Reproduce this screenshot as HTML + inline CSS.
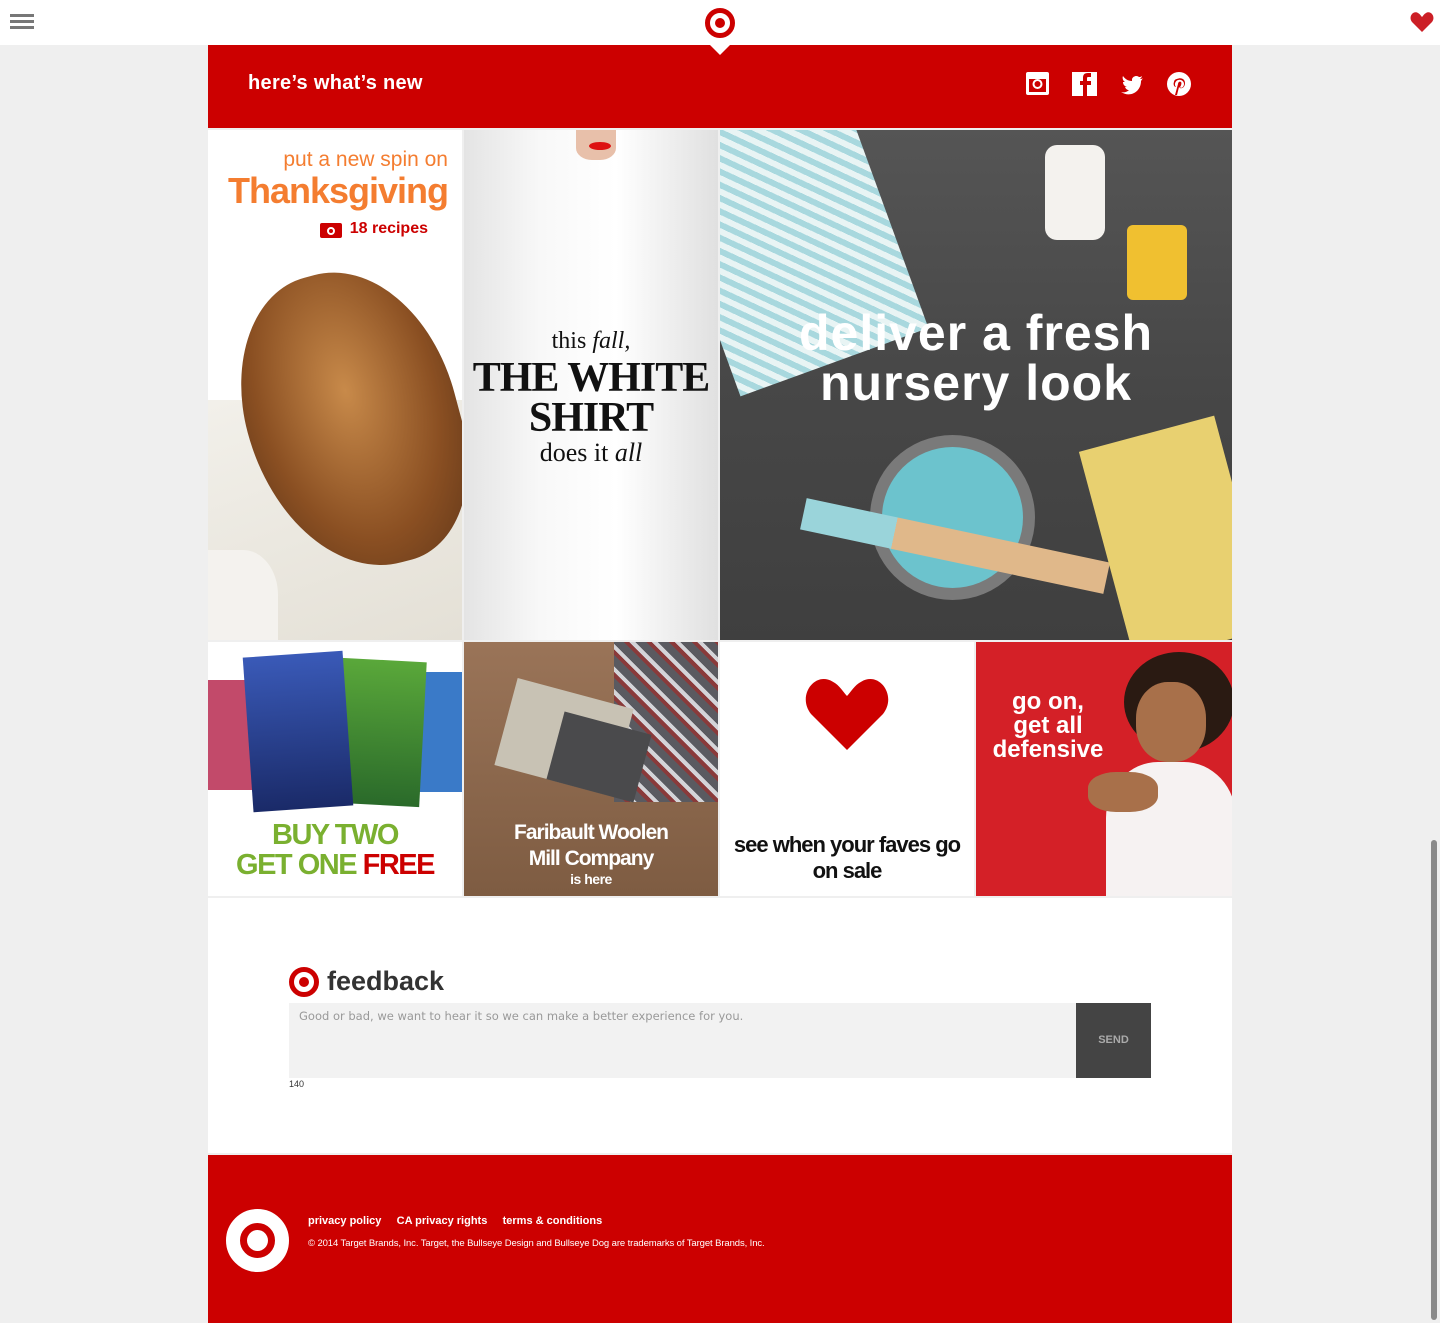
<!DOCTYPE html>
<html><head><meta charset="utf-8"><style>
*{margin:0;padding:0;box-sizing:border-box}
body{width:1440px;height:1323px;background:#efefef;font-family:"Liberation Sans",sans-serif;position:relative;overflow:hidden}
.abs{position:absolute}
</style></head><body>
<div class="abs" style="left:0;top:0;width:1440px;height:45px;background:#fff"></div>
<div class="abs" style="left:10px;top:14px;width:24px;height:3px;background:#777;box-shadow:0 6px 0 #777,0 12px 0 #777"></div>
<div class="abs" style="left:705px;top:8px;width:30px;height:30px;border-radius:50%;border:5px solid #cc0000;background:#fff"><div style="position:absolute;left:5px;top:5px;width:10px;height:10px;border-radius:50%;background:#cc0000"></div></div>
<svg class="abs" style="left:1410px;top:12px" width="24" height="20" viewBox="0 0 24 20"><path d="M12 20L2 10C-2 5 3-2 8 1c2 1 3 3 4 4 1-1 2-3 4-4 5-3 10 4 6 9z" fill="#cc1f26"/></svg>
<div class="abs" style="left:208px;top:45px;width:1024px;height:83px;background:#cc0000"></div>
<div class="abs" style="left:710px;top:45px;width:0;height:0;border-left:10px solid transparent;border-right:10px solid transparent;border-top:10px solid #fff"></div>
<div class="abs" style="left:248px;top:72px;color:#fff;font-size:20px;font-weight:bold;letter-spacing:0.3px">here’s what’s new</div>
<svg class="abs" style="left:1025px;top:71px" width="170" height="26" viewBox="0 0 170 26">
<rect x="1" y="1" width="23" height="23" rx="2" fill="#fff"/><rect x="4" y="8" width="17" height="13" fill="#cc0000"/><circle cx="12.5" cy="13" r="5" fill="#fff"/><circle cx="12.5" cy="13" r="3" fill="#cc0000"/>
<rect x="47" y="1" width="25" height="24" fill="#fff"/><path d="M62 25V14h4v-4h-4V7c0-1 1-1 2-1h2V2h-3c-4 0-5 2-5 5v3h-3v4h3v11z" fill="#cc0000"/>
<path d="M118 5c-1 1-2 1-3 1 1-1 2-2 2-3-1 1-2 1-3 1-2-2-6-1-7 2v2c-4 0-7-2-9-5-1 2 0 5 2 6h-2c0 2 1 4 4 5h-2c1 2 2 3 4 3-2 2-5 3-8 2 9 6 20 0 20-11z" fill="#fff" transform="translate(0,2)"/>
<circle cx="154" cy="13" r="12" fill="#fff"/><path d="M152 8c4-2 8 0 8 4 0 4-3 6-5 5l-1-1-2 8h-2l3-11c0-2 2-3 3-2s0 4-1 5c1 2 4 0 4-3 0-3-3-5-6-4-3 1-4 5-2 7-2 0-3-3-2-5 0-2 2-3 3-3z" fill="#cc0000"/>
</svg>
<!-- row1 -->
<div class="abs" style="left:208px;top:130px;width:254px;height:510px;background:#fff;overflow:hidden">
<div class="abs" style="left:0;top:270px;width:254px;height:240px;background:linear-gradient(160deg,#f2f0ea,#e4e0d6)"></div>
<div class="abs" style="left:40px;top:140px;width:210px;height:300px;border-radius:45% 50% 40% 55%;background:radial-gradient(ellipse at 50% 40%,#c88a4a,#8a4f22 60%,#5a3318);transform:rotate(-15deg)"></div>
<div class="abs" style="left:0;top:420px;width:70px;height:90px;background:#f4f2ee;border-radius:0 50% 0 0"></div>
<div class="abs" style="right:14px;top:18px;color:#f47d30;font-size:21px">put a new spin on</div>
<div class="abs" style="right:14px;top:40px;color:#f47d30;font-size:36px;font-weight:bold;letter-spacing:-1px">Thanksgiving</div>
<div class="abs" style="right:34px;top:90px;color:#cc0000;font-size:16px;font-weight:bold">18 recipes</div>
<div class="abs" style="left:112px;top:93px;width:22px;height:15px;background:#cc0000;border-radius:2px"><div style="position:absolute;left:7px;top:4px;width:8px;height:8px;border-radius:50%;border:2px solid #fff"></div></div>
</div>
<div class="abs" style="left:464px;top:130px;width:254px;height:510px;background:linear-gradient(90deg,#e4e4e4,#f8f8f8 30%,#fff 60%,#e0e0e0);overflow:hidden">
<div class="abs" style="left:112px;top:0;width:40px;height:30px;background:#e8c0aa;border-radius:0 0 40% 40%"></div>
<div class="abs" style="left:125px;top:12px;width:22px;height:8px;background:#d11;border-radius:50%"></div>
<div class="abs" style="left:0;width:254px;top:198px;text-align:center;font-family:'Liberation Serif',serif;color:#111;font-size:24px">this <i>fall,</i></div>
<div class="abs" style="left:0;width:254px;top:228px;text-align:center;font-family:'Liberation Serif',serif;color:#111;font-size:42px;line-height:40px;font-weight:bold;letter-spacing:-1px">THE WHITE<br>SHIRT</div>
<div class="abs" style="left:0;width:254px;top:308px;text-align:center;font-family:'Liberation Serif',serif;color:#111;font-size:26px">does it <i>all</i></div>
</div>
<div class="abs" style="left:720px;top:130px;width:512px;height:510px;background:linear-gradient(180deg,#555,#474747 50%,#3f3f3f);overflow:hidden">
<div class="abs" style="left:-30px;top:-20px;width:200px;height:260px;background:repeating-linear-gradient(45deg,#a8d8de 0 6px,#e8f4f4 6px 12px);transform:rotate(-20deg)"></div>
<div class="abs" style="left:325px;top:15px;width:60px;height:95px;background:#f4f2ee;border-radius:12px"></div>
<div class="abs" style="left:407px;top:95px;width:60px;height:75px;background:#f0c030;border-radius:6px"></div>
<div class="abs" style="left:150px;top:305px;width:165px;height:165px;border-radius:50%;background:#7a7a7a"></div>
<div class="abs" style="left:162px;top:317px;width:141px;height:141px;border-radius:50%;background:#6cc3cd"></div>
<div class="abs" style="left:80px;top:400px;width:310px;height:32px;background:linear-gradient(90deg,#9ad4da 30%,#e0b88a 30%);transform:rotate(12deg)"></div>
<div class="abs" style="left:385px;top:300px;width:140px;height:220px;background:#e8d070;transform:rotate(-15deg)"></div>
<div class="abs" style="left:0;width:512px;top:178px;text-align:center;color:#fff;font-size:50px;font-weight:bold;line-height:50px;letter-spacing:1px">deliver a fresh<br>nursery look</div>
</div>
<!-- row2 -->
<div class="abs" style="left:208px;top:642px;width:254px;height:254px;background:#fff;overflow:hidden">
<div class="abs" style="left:0;top:38px;width:60px;height:110px;background:#c24a6a"></div>
<div class="abs" style="left:210px;top:30px;width:44px;height:120px;background:#3a7ac8"></div>
<div class="abs" style="left:130px;top:18px;width:85px;height:145px;background:linear-gradient(#5aa83a,#2a6a2a);transform:rotate(3deg)"></div>
<div class="abs" style="left:40px;top:12px;width:100px;height:155px;background:linear-gradient(#3a5ab8,#1a2a68);transform:rotate(-4deg)"></div>
<div class="abs" style="left:0;width:254px;top:178px;text-align:center;font-weight:bold;font-size:29px;line-height:30px;letter-spacing:-1.5px"><span style="color:#7ab030">BUY TWO</span><br><span style="color:#7ab030">GET ONE </span><span style="color:#cc0000">FREE</span></div>
</div>
<div class="abs" style="left:464px;top:642px;width:254px;height:254px;background:linear-gradient(180deg,#9a7458,#7e5c42);overflow:hidden">
<div class="abs" style="left:150px;top:0;width:104px;height:160px;background:repeating-linear-gradient(45deg,#5a5a60 0 8px,#8a3a3a 8px 12px,#d4d4d8 12px 16px)"></div>
<div class="abs" style="left:40px;top:50px;width:120px;height:90px;background:#c8c2b4;transform:rotate(15deg)"></div>
<div class="abs" style="left:90px;top:80px;width:90px;height:70px;background:#4a4a4c;transform:rotate(15deg)"></div>
<div class="abs" style="left:0;width:254px;top:178px;text-align:center;color:#fff;font-weight:bold;font-size:21px;line-height:26px;letter-spacing:-1px">Faribault Woolen<br>Mill Company</div>
<div class="abs" style="left:0;width:254px;top:229px;text-align:center;color:#fff;font-weight:bold;font-size:14px;letter-spacing:-0.5px">is here</div>
</div>
<div class="abs" style="left:720px;top:642px;width:254px;height:254px;background:#fff">
<svg class="abs" style="left:82px;top:36px" width="90" height="72" viewBox="0 0 24 20"><path d="M12 20L2 10C-2 5 3-2 8 1c2 1 3 3 4 4 1-1 2-3 4-4 5-3 10 4 6 9z" fill="#cc0000"/></svg>
<div class="abs" style="left:0;width:254px;top:190px;text-align:center;color:#111;font-weight:bold;font-size:22px;line-height:26px;letter-spacing:-1px">see when your faves go<br>on sale</div>
</div>
<div class="abs" style="left:976px;top:642px;width:256px;height:254px;background:#d42027;overflow:hidden">
<div class="abs" style="left:148px;top:10px;width:110px;height:100px;border-radius:50%;background:#2a1a12"></div>
<div class="abs" style="left:160px;top:40px;width:70px;height:80px;border-radius:45%;background:#a8704a"></div>
<div class="abs" style="left:130px;top:120px;width:130px;height:140px;border-radius:40% 40% 0 0;background:#f6f2f2"></div>
<div class="abs" style="left:112px;top:130px;width:70px;height:40px;border-radius:40%;background:#a8704a"></div>
<div class="abs" style="left:0;width:144px;top:48px;text-align:center;color:#fff;font-weight:bold;font-size:24px;line-height:24px">go on,<br>get all<br>defensive</div>
</div>
<!-- feedback -->
<div class="abs" style="left:208px;top:898px;width:1024px;height:255px;background:#fff"></div>
<div class="abs" style="left:289px;top:967px;width:30px;height:30px;border-radius:50%;border:5px solid #cc0000"><div style="position:absolute;left:5px;top:5px;width:10px;height:10px;border-radius:50%;background:#cc0000"></div></div>
<div class="abs" style="left:327px;top:966px;font-size:27px;font-weight:bold;color:#333">feedback</div>
<div class="abs" style="left:289px;top:1003px;width:787px;height:75px;background:#f2f2f2"></div>
<div class="abs" style="left:299px;top:1009px;font-family:'DejaVu Sans',sans-serif;font-size:11.5px;color:#999">Good or bad, we want to hear it so we can make a better experience for you.</div>
<div class="abs" style="left:1076px;top:1003px;width:75px;height:75px;background:#444;color:#aaa;font-size:11px;font-weight:bold;text-align:center;line-height:75px">SEND</div>
<div class="abs" style="left:289px;top:1079px;font-size:9px;color:#333">140</div>
<!-- footer -->
<div class="abs" style="left:208px;top:1155px;width:1024px;height:168px;background:#cc0000"></div>
<div class="abs" style="left:226px;top:1209px;width:63px;height:63px;border-radius:50%;border:14px solid #fff"><div style="position:absolute;left:7px;top:7px;width:21px;height:21px;border-radius:50%;background:#fff"></div></div>
<div class="abs" style="left:308px;top:1215px;color:#fff;font-size:11px;font-weight:bold">privacy policy&nbsp;&nbsp;&nbsp;&nbsp;&nbsp;CA privacy rights&nbsp;&nbsp;&nbsp;&nbsp;&nbsp;terms &amp; conditions</div>
<div class="abs" style="left:308px;top:1238px;color:#fff;font-size:9.5px;letter-spacing:-0.1px">© 2014 Target Brands, Inc. Target, the Bullseye Design and Bullseye Dog are trademarks of Target Brands, Inc.</div>
<div class="abs" style="left:1431px;top:840px;width:6px;height:480px;background:#8a8a8a;border-radius:3px"></div>
</body></html>
